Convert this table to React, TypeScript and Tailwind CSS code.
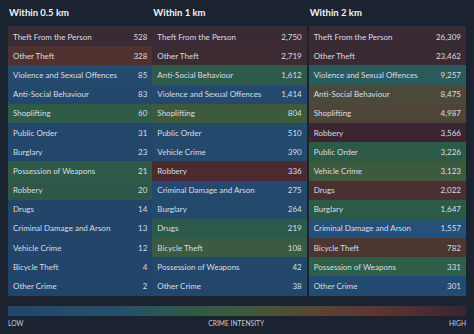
import React from 'react'

type Row = { name: string; count: string; bg: string }

const BLUE = 'bg-[#23476b]'
const GREEN = 'bg-[#2d5a47]'

const columns: { title: string; width: string; rows: Row[] }[] = [
    {
        title: 'Within 0.5 km',
        width: 'w-[145px]',
        rows: [
            { name: 'Theft From the Person', count: '528', bg: 'bg-[#3a2a33]' },
            { name: 'Other Theft', count: '328', bg: 'bg-[#4f3230]' },
            { name: 'Violence and Sexual Offences', count: '85', bg: 'bg-[#244a6e]' },
            { name: 'Anti-Social Behaviour', count: '83', bg: 'bg-[#24486c]' },
            { name: 'Shoplifting', count: '60', bg: 'bg-[#2f5b46]' },
            { name: 'Public Order', count: '31', bg: BLUE },
            { name: 'Burglary', count: '23', bg: BLUE },
            { name: 'Possession of Weapons', count: '21', bg: 'bg-[#2e5a47]' },
            { name: 'Robbery', count: '20', bg: 'bg-[#2c5749]' },
            { name: 'Drugs', count: '14', bg: 'bg-[#224569]' },
            { name: 'Criminal Damage and Arson', count: '13', bg: 'bg-[#224569]' },
            { name: 'Vehicle Crime', count: '12', bg: 'bg-[#224569]' },
            { name: 'Bicycle Theft', count: '4', bg: 'bg-[#21446a]' },
            { name: 'Other Crime', count: '2', bg: 'bg-[#21446a]' },
        ],
    },
    {
        title: 'Within 1 km',
        width: 'w-[155px]',
        rows: [
            { name: 'Theft From the Person', count: '2,750', bg: 'bg-[#3a2a33]' },
            { name: 'Other Theft', count: '2,719', bg: 'bg-[#3d2b33]' },
            { name: 'Anti-Social Behaviour', count: '1,612', bg: 'bg-[#2d5a4b]' },
            { name: 'Violence and Sexual Offences', count: '1,414', bg: 'bg-[#234a6c]' },
            { name: 'Shoplifting', count: '804', bg: 'bg-[#3e5a3d]' },
            { name: 'Public Order', count: '510', bg: 'bg-[#234a6c]' },
            { name: 'Vehicle Crime', count: '390', bg: 'bg-[#234a6c]' },
            { name: 'Robbery', count: '336', bg: 'bg-[#4a2c30]' },
            { name: 'Criminal Damage and Arson', count: '275', bg: 'bg-[#234a6c]' },
            { name: 'Burglary', count: '264', bg: 'bg-[#234a6c]' },
            { name: 'Drugs', count: '219', bg: 'bg-[#2c5a4a]' },
            { name: 'Bicycle Theft', count: '108', bg: 'bg-[#3a5a41]' },
            { name: 'Possession of Weapons', count: '42', bg: BLUE },
            { name: 'Other Crime', count: '38', bg: BLUE },
        ],
    },
    {
        title: 'Within 2 km',
        width: 'w-[158px]',
        rows: [
            { name: 'Theft From the Person', count: '26,309', bg: 'bg-[#3a2a33]' },
            { name: 'Other Theft', count: '23,462', bg: 'bg-[#3a2a33]' },
            { name: 'Violence and Sexual Offences', count: '9,257', bg: 'bg-[#2a5a5a]' },
            { name: 'Anti-Social Behaviour', count: '8,475', bg: 'bg-[#4a4a3b]' },
            { name: 'Shoplifting', count: '4,987', bg: 'bg-[#4e4538]' },
            { name: 'Robbery', count: '3,566', bg: 'bg-[#3b2531]' },
            { name: 'Public Order', count: '3,226', bg: GREEN },
            { name: 'Vehicle Crime', count: '3,123', bg: 'bg-[#3d5a3f]' },
            { name: 'Drugs', count: '2,022', bg: 'bg-[#4a3031]' },
            { name: 'Burglary', count: '1,647', bg: GREEN },
            { name: 'Criminal Damage and Arson', count: '1,557', bg: 'bg-[#25507a]' },
            { name: 'Bicycle Theft', count: '782', bg: 'bg-[#4d3631]' },
            { name: 'Possession of Weapons', count: '331', bg: 'bg-[#2f5f48]' },
            { name: 'Other Crime', count: '301', bg: 'bg-[#234a70]' },
        ],
    },
]

export default function App() {
    return (
        <div className="w-[474px] h-[334px] bg-[#1b2230] text-[#d9dee6] font-['Lato',sans-serif] overflow-hidden px-2">
            <div className="flex flex-row">
                {columns.map((col, i) => (
                    <div key={i} className={`flex flex-col ${col.width} ${i === 2 ? 'ml-[2px]' : ''}`}>
                        <div className="h-[27px] flex items-center pl-[1px] pt-[1px] border-b border-[#2c3443] text-[9.5px] font-bold text-[#f1f4f8]">
                            {col.title}
                        </div>
                        {col.rows.map((r) => (
                            <div key={r.name} className={`h-[19.2px] flex flex-row items-center justify-between px-[5px] text-[8px] ${r.bg}`}>
                                <span>{r.name}</span>
                                <span>{r.count}</span>
                            </div>
                        ))}
                    </div>
                ))}
            </div>
            <div className="mt-[10px] h-[10px] w-full bg-[linear-gradient(to_right,#22466a_0%,#25506a_25%,#2f5a45_40%,#3f5a3c_52%,#5a4434_68%,#5a3530_82%,#3b2530_100%)]"></div>
            <div className="flex flex-row justify-between items-center mt-[2px] text-[6.7px] text-[#c9ced8]">
                <span>LOW</span>
                <span>CRIME INTENSITY</span>
                <span>HIGH</span>
            </div>
        </div>
    )
}
